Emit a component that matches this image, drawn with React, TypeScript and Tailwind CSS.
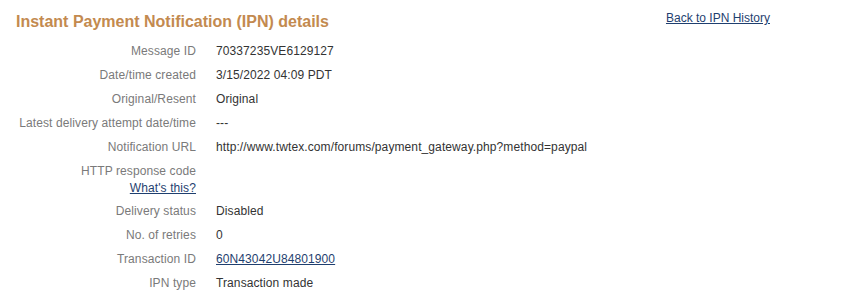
const FONT = { fontFamily: '"Liberation Sans", Arial, sans-serif' };

type Row = { label: string; value?: string; link?: boolean; help?: boolean };

const rows: Row[] = [
  { label: "Message ID", value: "70337235VE6129127" },
  { label: "Date/time created", value: "3/15/2022 04:09 PDT" },
  { label: "Original/Resent", value: "Original" },
  { label: "Latest delivery attempt date/time", value: "---" },
  { label: "Notification URL", value: "http://www.twtex.com/forums/payment_gateway.php?method=paypal" },
  { label: "HTTP response code", help: true },
  { label: "Delivery status", value: "Disabled" },
  { label: "No. of retries", value: "0" },
  { label: "Transaction ID", value: "60N43042U84801900", link: true },
  { label: "IPN type", value: "Transaction made" },
];

export default function App() {
  return (
    <div style={FONT} className="w-[855px] h-[296px] bg-white overflow-hidden">
      <div className="w-[770px] pt-[9px] pl-4 flex items-start justify-between">
        <h1 className="mt-[3px] text-[16px] leading-[20px] font-bold text-[#c38a4f]">
          Instant Payment Notification (IPN) details
        </h1>
        <a href="#" className="text-[12px] leading-[18px] text-[#1f3f6f] underline">
          Back to IPN History
        </a>
      </div>

      <div className="mt-[7px] flex flex-col text-[12px] tracking-[0.1px]">
        {rows.map((r) => (
          <div key={r.label} className="flex py-[3px]">
            <div className="w-[196px] shrink-0 text-right text-[#7a7a7a]">
              <div className="leading-[18px]">{r.label}</div>
              {r.help && (
                <a href="#" className="block leading-[16px] text-[#1f3f6f] underline">
                  What's this?
                </a>
              )}
            </div>
            <div className="pl-[20px] leading-[18px] text-[#333333]">
              {r.link ? (
                <a href="#" className="text-[#1f3f6f] underline">{r.value}</a>
              ) : (
                r.value
              )}
            </div>
          </div>
        ))}
      </div>
    </div>
  );
}
